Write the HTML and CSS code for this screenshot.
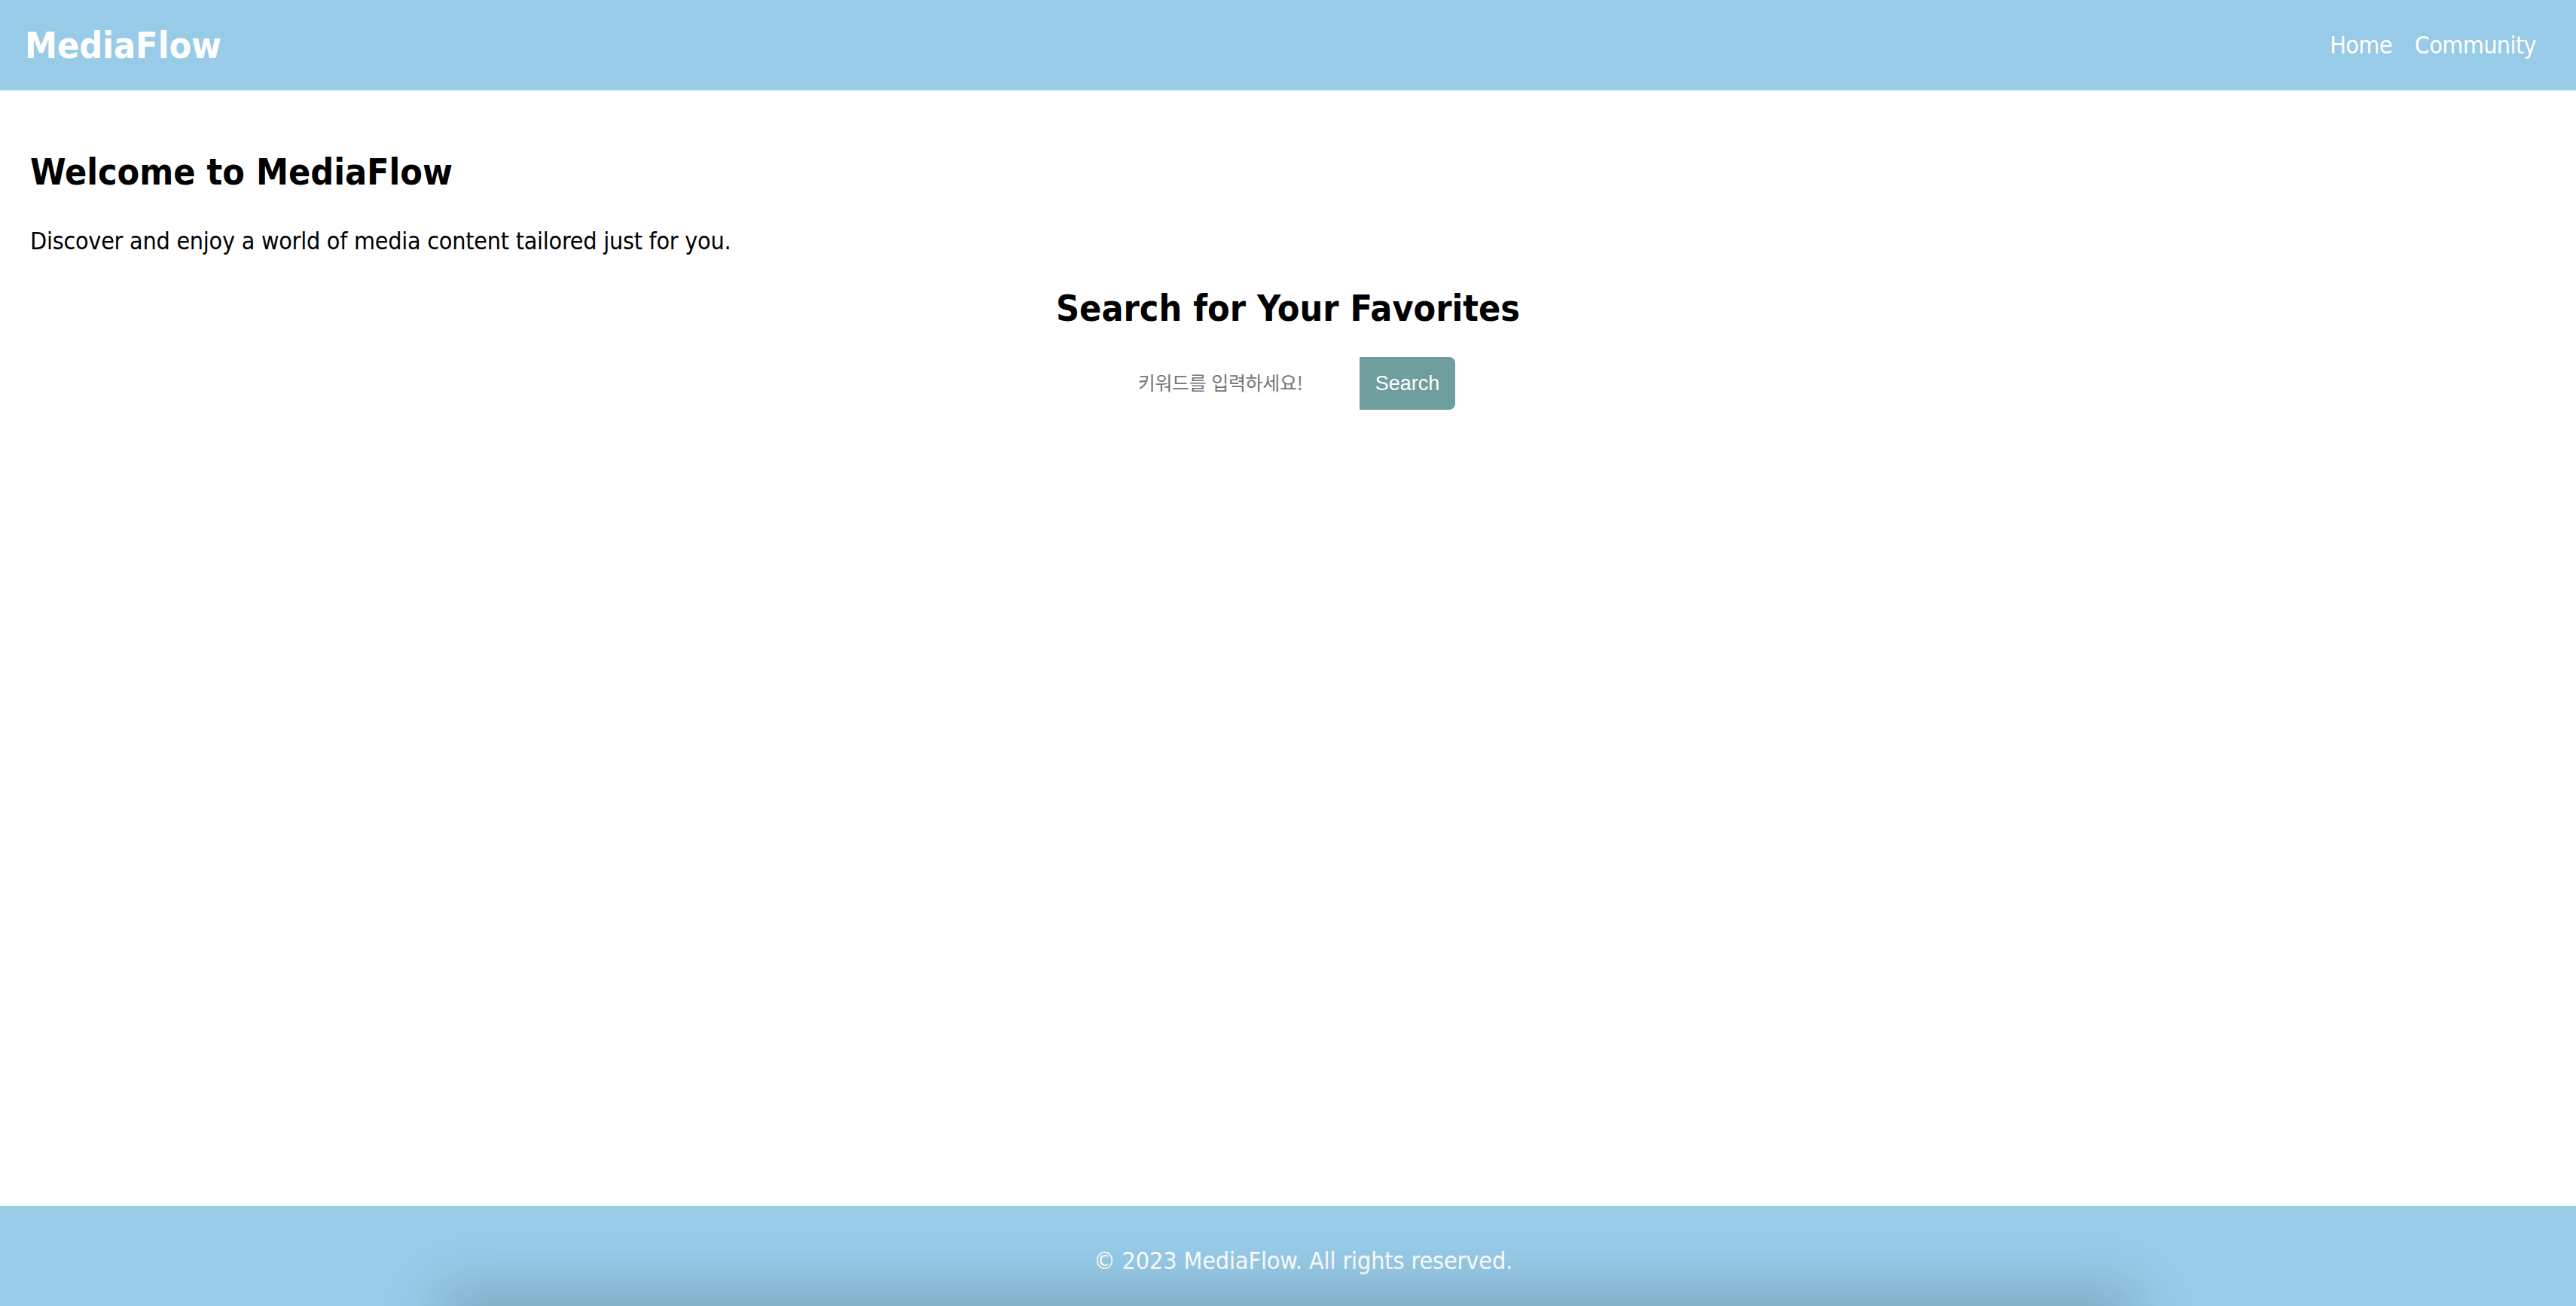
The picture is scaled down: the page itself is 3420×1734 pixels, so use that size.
FILE: index.html
```html
<!DOCTYPE html>
<html lang="ko">
<head>
<meta charset="utf-8">
<title>MediaFlow</title>
<link rel="stylesheet" href="styles.css">
</head>
<body>
<div class="page">
  <header class="site-header">
    <div class="logo">MediaFlow</div>
    <nav class="nav">
      <a href="#" class="nav-link">Home</a>
      <a href="#" class="nav-link">Community</a>
    </nav>
  </header>
  <main class="main">
    <section class="intro">
      <h2 class="intro-title">Welcome to MediaFlow</h2>
      <p class="intro-text">Discover and enjoy a world of media content tailored just for you.</p>
    </section>
    <section class="search">
      <h2 class="search-title">Search for Your Favorites</h2>
      <form class="search-form">
        <input class="search-input" type="text" placeholder="키워드를 입력하세요!">
        <button class="search-button" type="button">Search</button>
      </form>
    </section>
  </main>
  <footer class="site-footer">
    <p class="footer-text">© 2023 MediaFlow. All rights reserved.</p>
  </footer>
</div>
</body>
</html>
```
FILE: styles.css
```css
html, body {
  margin: 0;
  padding: 0;
  height: 100%;
  overflow: hidden;
}
body {
  font-family: "DejaVu Sans Condensed", "DejaVu Sans", sans-serif;
  font-stretch: condensed;
  font-size: 32px;
  color: #000;
  background: #fff;
}
.page {
  display: flex;
  flex-direction: column;
  min-height: 100vh;
}
.site-header {
  display: flex;
  align-items: center;
  justify-content: space-between;
  height: 120px;
  padding: 0 53px 0 33px;
  background: #97cbe8;
}
.logo {
  color: #fff;
  font-weight: bold;
  font-size: 48px;
}
.nav {
  display: flex;
  gap: 30px;
}
.nav-link {
  color: #fff;
  text-decoration: none;
  font-size: 32px;
  letter-spacing: -0.6px;
}
.main {
  flex: 1;
  padding: 40px 40px;
}
.intro-title {
  font-size: 48px;
  margin: 40px 0 45px;
}
.intro-text {
  margin: 0;
  letter-spacing: -0.25px;
}
.search {
  display: flex;
  flex-direction: column;
  align-items: center;
}
.search-title {
  font-size: 48px;
  margin: 42px 0 37px;
}
.search-form {
  display: flex;
  margin: 0;
}
.search-input {
  box-sizing: border-box;
  width: 317px;
  height: 70px;
  padding: 0 20px 0 23px;
  border: none;
  outline: none;
  font-family: "Liberation Sans", "Noto Sans CJK KR", sans-serif;
  font-size: 25px;
}
.search-input::placeholder {
  color: #757575;
  font-family: "Noto Sans CJK KR", sans-serif;
  letter-spacing: -0.3px;
}
.search-button {
  height: 70px;
  padding: 0 21px;
  border: none;
  border-radius: 0 8px 8px 0;
  background: #6f9e9f;
  color: #fff;
  font-family: "Liberation Sans", sans-serif;
  font-size: 27px;
}
.site-footer {
  position: relative;
  height: 133px;
  padding: 12px 0 0 40px;
  box-sizing: border-box;
  display: flex;
  align-items: center;
  justify-content: center;
  background: #97cbe8;
  overflow: hidden;
}
.site-footer::after {
  content: "";
  position: absolute;
  left: 600px;
  right: 600px;
  top: 133px;
  height: 40px;
  box-shadow: 0 0 80px 10px rgba(0, 0, 0, 0.25);
}
.footer-text {
  margin: 0;
  color: #fff;
  font-size: 32px;
  letter-spacing: -0.1px;
}
```
